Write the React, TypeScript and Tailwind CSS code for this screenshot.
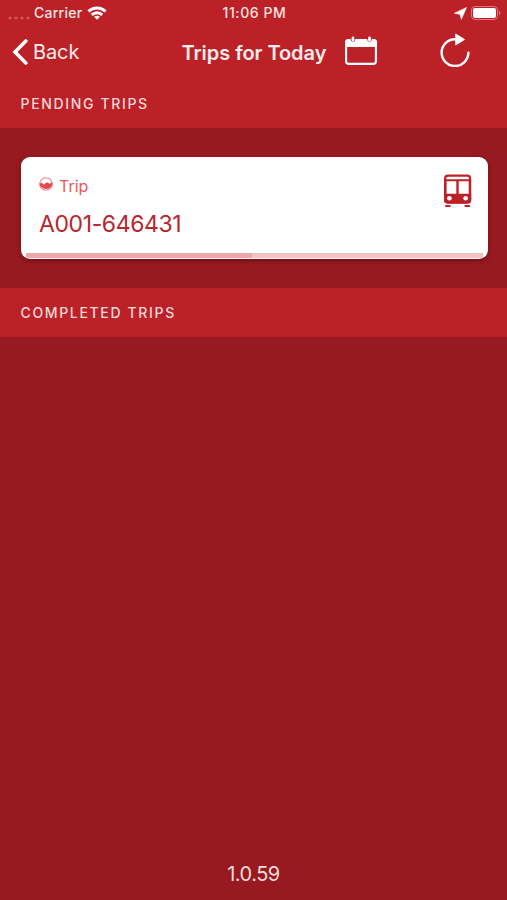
import type { ReactNode } from 'react';

interface Trip {
  id: string;
  code: string;
  progress: number;
}

const pendingTrips: Trip[] = [{ id: '1', code: 'A001-646431', progress: 49.5 }];

function StatusBar() {
  return (
    <div className="grid h-[26px] grid-cols-3 items-center pl-[8px] pr-[6px] text-[14px] font-medium text-[#fbe3e1]">
      <div className="flex items-center">
        <svg className="mr-[4px] mt-[9px] h-[4px] w-[22px]" viewBox="0 0 22 4" fill="#e0777a" opacity="0.65">
          <circle cx="2" cy="2" r="1.6" />
          <circle cx="8" cy="2" r="1.6" />
          <circle cx="14" cy="2" r="1.6" />
          <circle cx="20" cy="2" r="1.6" />
        </svg>
        <span className="mb-px tracking-[0.25px]">Carrier</span>
        <svg className="ml-[5px] h-[14px] w-[20px]" viewBox="0 0 20 14" fill="none" stroke="#fff" strokeWidth="2.9">
          <path d="M1.4 5.4C6.2 0.8 13.8 0.8 18.6 5.4" />
          <path d="M4.7 8.9C7.7 6 12.3 6 15.3 8.9" />
          <path d="M10 13.8L7 10.8C8.7 9.3 11.3 9.3 13 10.8Z" fill="#fff" stroke="none" />
        </svg>
      </div>
      <div className="mb-px whitespace-nowrap text-center tracking-[0.6px]">11:06 PM</div>
      <div className="flex items-center justify-end gap-[4px]">
        <svg className="h-[13px] w-[13px]" viewBox="0 0 12 12" fill="#fff">
          <path d="M11.6 0.4L6.8 11.4L5.4 6.8L0.3 5.7Z" stroke="#fff" strokeWidth="0.5" strokeLinejoin="round" />
        </svg>
        <svg className="h-[14px] w-[30px]" viewBox="0 0 30 14">
          <rect x="0.5" y="0.5" width="26" height="13" rx="3.4" fill="none" stroke="#d9797c" />
          <rect x="2" y="2" width="23" height="10" rx="2" fill="#fff" />
          <path d="M28 4.6C29.8 5.4 29.8 8.6 28 9.4Z" fill="#d9797c" />
        </svg>
      </div>
    </div>
  );
}

function NavBar() {
  return (
    <header className="flex h-[53px] items-center pl-[12px] pr-[37px] text-[#fdeceb]">
      <button className="mb-[2px] flex w-[169.5px] items-center text-[20px]">
        <svg className="mr-[5px] h-[26px] w-[16px]" viewBox="0 0 16 26" fill="none" stroke="#fff" strokeWidth="3.6">
          <path d="M13.8 2L3 13L13.8 24" strokeLinecap="round" />
        </svg>
        <span className="tracking-[-0.1px]">Back</span>
      </button>
      <h1 className="w-[163.5px] whitespace-nowrap text-[20px] font-semibold tracking-[-0.05px]">Trips for Today</h1>
      <button className="mb-[3px]">
        <svg className="h-[30px] w-[32px]" viewBox="0 0 32 30" fill="none">
          <rect x="1.1" y="4.1" width="29.8" height="23.8" rx="2.6" stroke="#fff" strokeWidth="2.1" />
          <path d="M0 6.5Q0 3 3 3H29Q32 3 32 6.5V11H0Z" fill="#fff" />
          <path d="M8 1.5V3.4M24.5 1.5V3.4" stroke="#bc2128" strokeWidth="4.6" strokeLinecap="round" />
          <path d="M8 1.8V4M24.5 1.8V4" stroke="#fff" strokeWidth="2.8" strokeLinecap="round" />
        </svg>
      </button>
      <button className="mb-[5px] ml-auto">
        <svg className="h-[34px] w-[30px]" viewBox="0 0 30 34" fill="none">
          <path d="M18 6.2H15A13.4 13.4 0 1 0 28.4 19.6" stroke="#fff" strokeWidth="2.4" strokeLinecap="round" />
          <path d="M15.2 1.2Q15.2 0.2 16 0.7L24.5 5.9Q25.2 6.4 24.5 7L16 12.2Q15.2 12.6 15.2 11.8Z" fill="#fff" />
        </svg>
      </button>
    </header>
  );
}

function SectionHeader({ children }: { children: ReactNode }) {
  return (
    <h2 className="flex h-[49px] items-center bg-[#bc2128] pl-[20.5px] text-[14px] font-medium uppercase tracking-[1.65px] text-[#fbd9d8]">
      {children}
    </h2>
  );
}

function BusIcon() {
  return (
    <svg className="h-[34px] w-[28px]" viewBox="0 0 28 34" fill="none">
      <rect x="1.1" y="1.6" width="25" height="27" rx="3" stroke="#bc2128" strokeWidth="2.2" />
      <path d="M1 6.2H26.2" stroke="#bc2128" strokeWidth="2" />
      <path d="M1.3 6V20M25.9 6V20M13.5 6V20" stroke="#bc2128" strokeWidth="2.4" />
      <path d="M0 19.8H27.2V26.5Q27.2 29.5 24.2 29.5H3Q0 29.5 0 26.5Z" fill="#bc2128" />
      <circle cx="5.4" cy="24.2" r="2.3" fill="#fff" />
      <circle cx="21.6" cy="24.2" r="2.3" fill="#fff" />
      <path d="M2 32H5.8M21.4 32H25.2" stroke="#bc2128" strokeWidth="1.9" strokeLinecap="round" />
    </svg>
  );
}

function TripCard({ trip }: { trip: Trip }) {
  return (
    <article className="flex h-[102px] flex-col overflow-hidden rounded-[9px] bg-white shadow-[0_2px_4px_rgba(60,0,5,0.4)]">
      <div className="flex flex-1 justify-between pl-[18.5px] pr-[15.5px] pt-[17px]">
        <div>
          <div className="flex h-[24px] items-center gap-[6px] text-[16px] text-[#e9585b]">
            <svg className="mb-[4px] h-[14px] w-[14px]" viewBox="0 0 14 14">
              <circle cx="7" cy="7" r="6.3" fill="none" stroke="#ec8180" strokeWidth="1.1" />
              <path d="M0.5 7L2.6 5.6L4.6 7.8L8 5.2L10.6 6.8L13.5 5.2A6.6 6.6 0 0 1 0.5 7Z" fill="#e5484c" />
            </svg>
            <span>Trip</span>
          </div>
          <p className="mt-[9px] text-[23px] leading-[34px] tracking-[-0.4px] text-[#b9252d]">{trip.code}</p>
        </div>
        <BusIcon />
      </div>
      <div className="mx-[5px] mb-px h-[5px] bg-[#f0c3c3]">
        <div className="h-full bg-[#eaa8aa]" style={{ width: `${trip.progress}%` }} />
      </div>
    </article>
  );
}

export default function App() {
  return (
    <div className="flex h-screen flex-col bg-[#961a1f] font-['Inter','Liberation_Sans',sans-serif]">
      <div className="bg-[#bc2128]">
        <StatusBar />
        <NavBar />
      </div>

      {/* Pending trips */}
      <SectionHeader>Pending Trips</SectionHeader>
      <section className="pb-[29px] pl-[20.5px] pr-[19.5px] pt-[29px]">
        {pendingTrips.map((trip) => (
          <TripCard key={trip.id} trip={trip} />
        ))}
      </section>

      {/* Completed trips */}
      <SectionHeader>Completed Trips</SectionHeader>

      <footer className="mt-auto pb-[11px] text-center text-[20px] leading-[30px] tracking-[-0.5px] text-[#f8dcda]">
        1.0.59
      </footer>
    </div>
  );
}
